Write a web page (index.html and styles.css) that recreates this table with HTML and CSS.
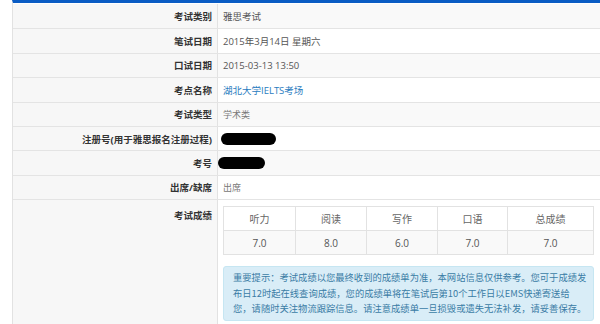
FILE: index.html
```html
<!DOCTYPE html>
<html lang="zh-CN">
<head>
<meta charset="utf-8">
<link rel="stylesheet" href="styles.css">
</head>
<body>
<div class="info">
  <div class="row odd"><div class="lbl">考试类别</div><div class="val">雅思考试</div></div>
  <div class="row"><div class="lbl">笔试日期</div><div class="val">2015年3月14日 星期六</div></div>
  <div class="row odd"><div class="lbl">口试日期</div><div class="val">2015-03-13 13:50</div></div>
  <div class="row"><div class="lbl">考点名称</div><div class="val"><a class="link" href="#">湖北大学IELTS考场</a></div></div>
  <div class="row odd"><div class="lbl">考试类型</div><div class="val light">学术类</div></div>
  <div class="row"><div class="lbl">注册号(用于雅思报名注册过程)</div><div class="val"><span class="blot blot-a"></span></div></div>
  <div class="row odd"><div class="lbl">考号</div><div class="val tight"><span class="blot blot-b"></span></div></div>
  <div class="row"><div class="lbl">出席/缺席</div><div class="val light">出席</div></div>
  <div class="row score-row">
    <div class="lbl top">考试成绩</div>
    <div class="val scores">
      <table class="grade">
        <thead>
          <tr><th class="c1">听力</th><th class="c2">阅读</th><th class="c3">写作</th><th class="c4">口语</th><th>总成绩</th></tr>
        </thead>
        <tbody>
          <tr><td>7.0</td><td>8.0</td><td>6.0</td><td>7.0</td><td>7.0</td></tr>
        </tbody>
      </table>
      <div class="notice">重要提示：考试成绩以您最终收到的成绩单为准，本网站信息仅供参考。您可于成绩发<br>布日12时起在线查询成绩，您的成绩单将在笔试后第10个工作日以EMS快递寄送给<br>您，请随时关注物流跟踪信息。请注意成绩单一旦损毁或遗失无法补发，请妥善保存。</div>
    </div>
  </div>
</div>
</body>
</html>
```

FILE: styles.css
```css
html, body {
  margin: 0;
  padding: 0;
  background: #fff;
}
body {
  font-family: "Open Sans", "Noto Sans CJK SC", sans-serif;
  font-size: 9.5px;
  color: #555;
  overflow: hidden;
  height: 324px;
}
.info {
  margin-left: 12px;
  border-left: 1px solid #e2e2e2;
  border-top: 3px solid #0a5cc4;
  width: 588px;
  box-sizing: border-box;
}
.row {
  display: grid;
  grid-template-columns: 205px 1fr;
  height: 24.4px;
  box-sizing: border-box;
  border-top: 1px solid #e4e4e4;
}
.row:first-child {
  border-top: none;
  height: 25.4px;
  padding-top: 1px;
}
.lbl {
  background: #f7f7f7;
  border-right: 1px solid #e2e2e2;
  text-align: right;
  padding-right: 5px;
  font-weight: bold;
  color: #333;
  display: flex;
  align-items: center;
  justify-content: flex-end;
}
.val {
  display: flex;
  align-items: center;
  padding-left: 5px;
  color: #555;
  min-width: 0;
}
.odd .val { background: #f9f9f9; }
.val.light { color: #777; font-size: 9px; }
.val.tight { padding-left: 0; }
.link { color: #2a7cc0; text-decoration: none; }
.blot {
  display: inline-block;
  background: #000;
  border-radius: 7px;
}
.blot-a { width: 55px; height: 12px; margin-left: -2px; }
.blot-b { width: 47px; height: 12px; }
.score-row {
  height: 126px;
}
.lbl.top {
  align-items: flex-start;
  padding-top: 8px;
}
.scores {
  flex-direction: column;
  align-items: flex-start;
  justify-content: flex-start;
  padding-top: 6px;
}
.grade {
  border-collapse: collapse;
  width: 371px;
  table-layout: fixed;
}
.grade th, .grade td {
  border: 1px solid #e2e2e2;
  text-align: center;
  height: 23px;
  padding: 0;
  font-size: 10px;
}
.grade th { font-weight: normal; color: #666; background: #fff; }
.grade td { background: #f9f9f9; color: #555; }
.grade .c1 { width: 71px; }
.grade .c2 { width: 70px; }
.grade .c3 { width: 70px; }
.grade .c4 { width: 69px; }
.notice {
  box-sizing: border-box;
  width: 371px;
  margin-top: 11px;
  background: #d9edf7;
  border: 1px solid #c6e6f2;
  border-radius: 3px;
  color: #3a7ca5;
  padding: 3px 4px 3px 9px;
  line-height: 15.5px;
  font-size: 9.3px;
  font-family: "Noto Sans CJK SC", sans-serif;
  white-space: nowrap;
  overflow: hidden;
}
```
